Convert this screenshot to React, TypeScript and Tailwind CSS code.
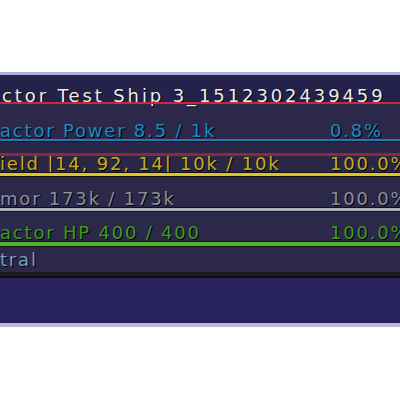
import React from "react";

const txt = "text-[18px] leading-[16px] tracking-[1.8px] whitespace-nowrap [text-shadow:1px_1px_0_#000]";

const App: React.FC = () => {
    return (
        <div className="w-[400px] h-[400px] bg-white overflow-hidden font-['DejaVu_Sans',sans-serif]">
            <div className="h-[72px]" />

            <div className="border-t-[3px] border-[#aeb0dc] bg-[#2c2849]">
                {/* ship name */}
                <div className="h-[29px] bg-[#24214a] flex flex-col justify-end">
                    <div className="text-[18px] leading-[16px] tracking-[2.9px] text-[#ececec] pl-[2px] whitespace-nowrap [text-shadow:1px_1px_0_#000] mb-[-2px]">
                        ctor Test Ship 3_1512302439459
                    </div>
                    <div className="h-[2px] bg-[#c8283c] relative" />
                </div>

                {/* reactor power */}
                <div className="h-[38px] flex flex-col justify-end">
                    <div className={`flex ${txt} text-[#1a8ac4]`}>
                        <span className="flex-1">actor Power 8.5 / 1k</span>
                        <span className="w-[70px]">0.8%</span>
                    </div>
                    <div className="h-[2px] bg-[#1c7fb4]" />
                    <div className="h-[1px] bg-[#111]" />
                </div>

                {/* shield */}
                <div className="h-[36px] flex flex-col bg-[#2a2646]">
                    <div className="h-[11px]" />
                    <div className="h-[3px] bg-[#8e2840]" />
                    <div className={`h-[16px] flex ${txt} text-[#c9ae1e]`}>
                        <span className="flex-1">ield |14, 92, 14| 10k / 10k</span>
                        <span className="w-[70px]">100.0%</span>
                    </div>
                    <div className="border-y border-[#111]">
                        <div className="h-[3px] bg-[#dcc42a]" />
                    </div>
                </div>

                {/* armor */}
                <div className="h-[35px] flex flex-col">
                    <div className={`h-[29px] flex items-end ${txt} text-[#8c8f9c]`}>
                        <span className="flex-1">mor 173k / 173k</span>
                        <span className="w-[70px]">100.0%</span>
                    </div>
                    <div className="border-y border-[#111]">
                        <div className="h-[3px] bg-[#a9b0b8]" />
                    </div>
                </div>

                {/* reactor hp */}
                <div className="h-[35px] flex flex-col">
                    <div className={`h-[28px] flex items-end ${txt} text-[#3f9a22]`}>
                        <span className="flex-1">actor HP 400 / 400</span>
                        <span className="w-[70px]">100.0%</span>
                    </div>
                    <div className="border-y border-[#111]">
                        <div className="h-[4px] bg-[#56b326]" />
                    </div>
                </div>

                {/* faction */}
                <div className={`h-[24px] flex items-end pb-[4px] ${txt} text-[#7f9ec4]`}>tral</div>
                <div className="h-[6px] bg-[#1b1a22] border-b-2 border-[#0c0b14]" />
                <div className="h-[45px] bg-[#27225e]" />
            </div>
            <div className="h-[4px] bg-[#b9b8da]" />
        </div>
    );
};

export default App;
